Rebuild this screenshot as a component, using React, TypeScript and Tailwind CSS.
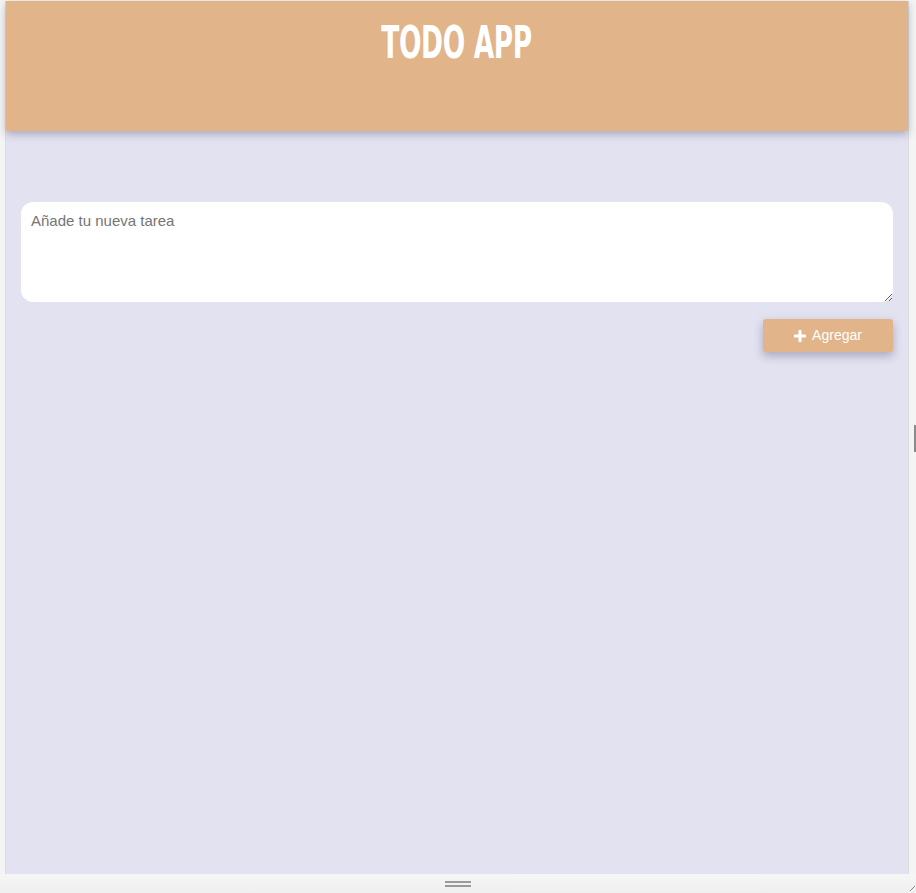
import { useState } from "react";

function PlusIcon() {
  return (
    <svg width="12" height="12" viewBox="0 0 12 12" fill="white" aria-hidden="true">
      <rect x="4.5" y="0" width="3" height="12" rx="0.6" />
      <rect x="0" y="4.5" width="12" height="3" rx="0.6" />
    </svg>
  );
}

export default function App() {
  const [task, setTask] = useState("");

  return (
    <div className="flex h-[893px] w-[916px] flex-col bg-[#f4f4f4] font-['Liberation_Sans',Arial,sans-serif]">
      <div className="flex h-[874px]">
        {/* left gutter */}
        <div className="w-[5px] shrink-0" />

        {/* app frame */}
        <div className="mt-[1px] flex w-[904px] shrink-0 flex-col border-x border-[#dcdcdc] bg-[#e3e2f0]">
          <header className="relative z-10 flex h-[130px] shrink-0 justify-center bg-[#e1b489] pt-[17px] shadow-[0_3px_8px_rgba(60,60,90,0.35)]">
            <h1 className="inline-block origin-top scale-x-[0.7] scale-y-[1.06] font-['DejaVu_Sans_Condensed','DejaVu_Sans',sans-serif] text-[42px] leading-[48px] font-bold tracking-[-0.5px] text-white">
              TODO APP
            </h1>
          </header>

          <main className="flex flex-col px-[15px] pt-[71px]">
            <textarea
              value={task}
              onChange={(e) => setTask(e.target.value)}
              placeholder="Añade tu nueva tarea"
              className="h-[100px] w-full rounded-xl bg-white px-[10px] pt-[8px] pb-[10px] text-[15px] text-[#444] outline-none placeholder:text-[#757575]"
            />
            <div className="mt-[17px] flex justify-end">
              <button className="flex h-[33px] w-[130px] items-center justify-center gap-[6px] rounded-[3px] bg-[#e1b489] text-[14px] text-white shadow-[0_4px_10px_rgba(60,60,100,0.35)]">
                <PlusIcon />
                Agregar
              </button>
            </div>
          </main>
        </div>

        {/* right gutter with scroll thumb */}
        <div className="flex w-[7px] shrink-0 justify-end">
          <div className="mt-[425px] h-[27px] w-[2px] bg-[#8a8a8a]" />
        </div>
      </div>

      {/* bottom resize bar */}
      <div className="flex h-[19px] items-center justify-between bg-gradient-to-b from-[#f6f6f6] to-[#efefef]">
        <div className="w-[20px]" />
        <div className="flex flex-col gap-[2px] pt-[1px]">
          <div className="h-[2px] w-[26px] bg-[#9a9a9a]" />
          <div className="h-[2px] w-[26px] bg-[#9a9a9a]" />
        </div>
        <div className="flex w-[20px] justify-end self-end pb-[2px] pr-[1px]">
          <svg width="6" height="6" viewBox="0 0 6 6" aria-hidden="true">
            <line x1="1" y1="6" x2="6" y2="1" stroke="#888" strokeWidth="1" />
          </svg>
        </div>
      </div>
    </div>
  );
}
